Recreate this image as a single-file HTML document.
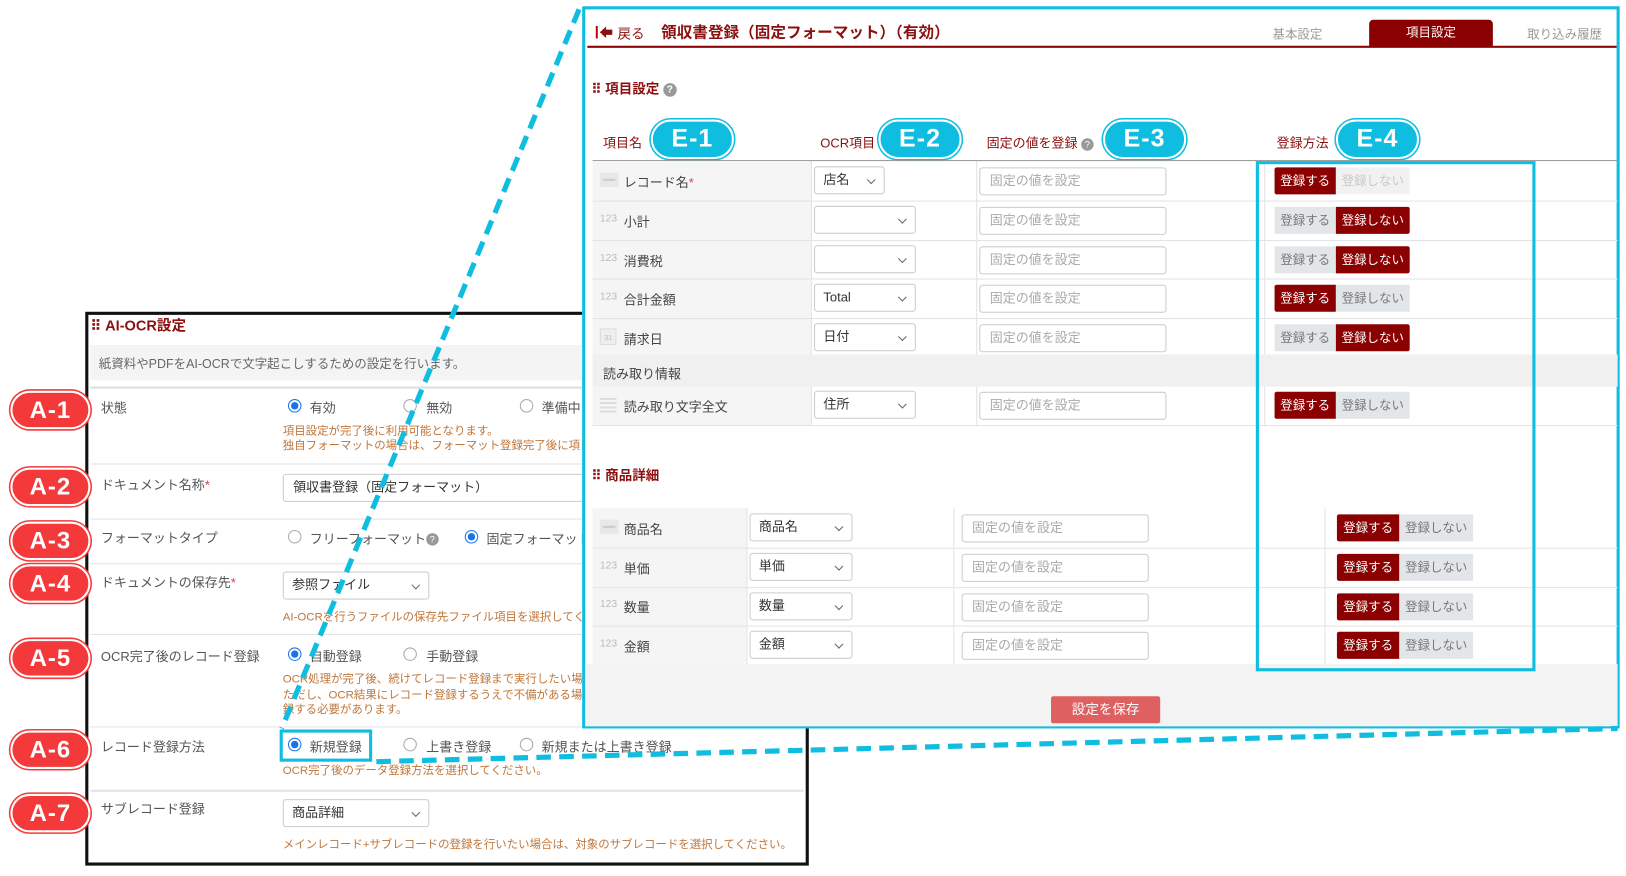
<!DOCTYPE html>
<html><head><meta charset="utf-8">
<style>
*{box-sizing:border-box;margin:0;padding:0}
html,body{width:1626px;height:876px;overflow:hidden;background:#fff}
body{font-family:"Liberation Sans","Noto Sans CJK JP",sans-serif;color:#333}
#c{position:absolute;left:0;top:-1px;width:1564px;height:843px;transform:scale(1.0396,1.0391);transform-origin:0 0}
.a{position:absolute;white-space:nowrap}
.lbl{font-size:12.5px;color:#555}
.note{font-size:11px;color:#c0763a}
.rd{position:absolute;width:13px;height:13px;border:1px solid #aaa;border-radius:50%;background:#fff}
.rd.on{border:1.5px solid #1a73e8}
.rd.on::after{content:"";position:absolute;left:2px;top:2px;width:6.5px;height:6.5px;border-radius:50%;background:#1a73e8}
.hl{position:absolute;height:1px;background:#e3e3e3}
.sel{position:absolute;height:27px;border:1px solid #ccc;border-radius:3px;background:#fff;font-size:12.5px;line-height:25px;padding-left:8px;color:#333}
.sel::after{content:"";position:absolute;right:9px;top:9px;width:5px;height:5px;border-right:1px solid #666;border-bottom:1px solid #666;transform:rotate(45deg)}
.inp{position:absolute;height:27px;border:1px solid #ccc;border-radius:3px;background:#fff;font-size:12.5px;line-height:25px;padding-left:9px;color:#aaa}
.bA{position:absolute;width:77px;height:37px;border-radius:19px;background:#f3393a;border:2px solid #fff;box-shadow:0 0 0 1.5px #f3393a;color:#fff;font-weight:bold;font-size:23px;line-height:33px;text-align:center;letter-spacing:1px}
.bE{position:absolute;width:80px;height:38px;border-radius:19px;background:#0fbde0;border:2px solid #fff;box-shadow:0 0 0 1.5px #0fbde0;color:#fff;font-weight:bold;font-size:24px;line-height:34px;text-align:center;letter-spacing:1px}
.btn{position:absolute;height:26px;font-size:12px;line-height:26px;text-align:center}
.on1{background:#8b0000;color:#fff;border-radius:2px 0 0 2px}
.on2{background:#8b0000;color:#fff;border-radius:0 2px 2px 0}
.off{background:#e3e6e9;color:#777}
.fade{background:#f1f1f1;color:#c8c8c8}
.c1{position:absolute;background:#f5f5f5}
.ic{position:absolute;font-size:10px;color:#bbb}
.dash{position:absolute;width:18px;height:14px;background:#e8e8e8}
.dash::after{content:"";position:absolute;left:3px;top:6px;width:12px;height:2px;background:#ccc}
.red{color:#e04040}
</style></head><body><div id="c">

<!-- LEFT PANEL -->
<div class="a" style="left:82px;top:301px;width:696px;height:533px;border:3px solid #111;background:#fff"></div>
<div class="a" style="left:87px;top:304px;font-size:14px;font-weight:bold;color:#8b1010">⠿ AI-OCR設定</div>
<div class="a" style="left:87px;top:333px;width:480px;height:34px;background:#f4f4f4"></div>
<div class="a lbl" style="left:95px;top:342px;font-size:12px;color:#666">紙資料やPDFをAI-OCRで文字起こしするための設定を行います。</div>
<div class="hl" style="left:87px;top:373px;width:686px;height:2px;background:#ddd"></div>

<div class="a lbl" style="left:97px;top:383px">状態</div>
<div class="rd on" style="left:277px;top:385px"></div><div class="a lbl" style="left:298px;top:383px">有効</div>
<div class="rd" style="left:388px;top:385px"></div><div class="a lbl" style="left:410px;top:383px">無効</div>
<div class="rd" style="left:500px;top:385px"></div><div class="a lbl" style="left:521px;top:383px">準備中</div>
<div class="a note" style="left:272px;top:407px">項目設定が完了後に利用可能となります。</div>
<div class="a note" style="left:272px;top:421px">独自フォーマットの場合は、フォーマット登録完了後に項目</div>
<div class="hl" style="left:87px;top:447px;width:686px"></div>

<div class="a lbl" style="left:97px;top:457px">ドキュメント名称<span class="red">*</span></div>
<div class="inp" style="left:272px;top:457px;width:320px;color:#333">領収書登録（固定フォーマット）</div>
<div class="hl" style="left:87px;top:500px;width:686px"></div>

<div class="a lbl" style="left:97px;top:508px">フォーマットタイプ</div>
<div class="rd" style="left:277px;top:511px"></div><div class="a lbl" style="left:298px;top:509px">フリーフォーマット<span style="display:inline-block;width:12px;height:12px;border-radius:50%;background:#999;color:#fff;font-size:9px;line-height:12px;text-align:center;vertical-align:1px">?</span></div>
<div class="rd on" style="left:447px;top:511px"></div><div class="a lbl" style="left:468px;top:509px">固定フォーマット</div>
<div class="hl" style="left:87px;top:543px;width:686px"></div>

<div class="a lbl" style="left:97px;top:551px">ドキュメントの保存先<span class="red">*</span></div>
<div class="sel" style="left:272px;top:551px;width:141px">参照ファイル</div>
<div class="a note" style="left:272px;top:586px">AI-OCRを行うファイルの保存先ファイル項目を選択してください。</div>
<div class="hl" style="left:87px;top:611px;width:686px"></div>

<div class="a lbl" style="left:97px;top:622px">OCR完了後のレコード登録</div>
<div class="rd on" style="left:277px;top:624px"></div><div class="a lbl" style="left:298px;top:622px">自動登録</div>
<div class="rd" style="left:388px;top:624px"></div><div class="a lbl" style="left:410px;top:622px">手動登録</div>
<div class="a note" style="left:272px;top:646px">OCR処理が完了後、続けてレコード登録まで実行したい場合</div>
<div class="a note" style="left:272px;top:661px">ただし、OCR結果にレコード登録するうえで不備がある場合</div>
<div class="a note" style="left:272px;top:675px">録する必要があります。</div>
<div class="hl" style="left:87px;top:700px;width:686px"></div>

<div class="a lbl" style="left:97px;top:709px">レコード登録方法</div>
<div class="rd on" style="left:277px;top:711px"></div><div class="a lbl" style="left:298px;top:709px">新規登録</div>
<div class="rd" style="left:388px;top:711px"></div><div class="a lbl" style="left:410px;top:709px">上書き登録</div>
<div class="rd" style="left:500px;top:711px"></div><div class="a lbl" style="left:521px;top:709px">新規または上書き登録</div>
<div class="a" style="left:269px;top:703px;width:89px;height:31px;border:3px solid #0fbde0"></div>
<div class="a note" style="left:272px;top:734px">OCR完了後のデータ登録方法を選択してください。</div>
<div class="hl" style="left:87px;top:761px;width:686px;height:2px"></div>

<div class="a lbl" style="left:97px;top:769px">サブレコード登録</div>
<div class="sel" style="left:272px;top:770px;width:141px">商品詳細</div>
<div class="a note" style="left:272px;top:805px">メインレコード+サブレコードの登録を行いたい場合は、対象のサブレコードを選択してください。</div>

<div class="bA" style="left:10px;top:377px">A-1</div>
<div class="bA" style="left:10px;top:451px">A-2</div>
<div class="bA" style="left:10px;top:503px">A-3</div>
<div class="bA" style="left:10px;top:544px">A-4</div>
<div class="bA" style="left:10px;top:616px">A-5</div>
<div class="bA" style="left:10px;top:704px">A-6</div>
<div class="bA" style="left:10px;top:765px">A-7</div>

<!-- RIGHT PANEL -->
<div class="a" style="left:560px;top:7px;width:998px;height:695px;border:3px solid #0fbde0;background:#fff"></div>
<svg class="a" style="left:573px;top:25px" width="18" height="14"><rect x="0" y="1" width="2" height="12" fill="#b00"/><path d="M4 7 L10 1.5 L10 4.5 L16 4.5 L16 9.5 L10 9.5 L10 12.5 Z" fill="#8b1010"/></svg>
<div class="a" style="left:594px;top:23px;font-size:13px;color:#8b1010">戻る</div>
<div class="a" style="left:636px;top:21px;font-size:15px;font-weight:bold;color:#8b1010">領収書登録（固定フォーマット）（有効）</div>
<div class="a" style="left:1224px;top:25px;font-size:12px;color:#999">基本設定</div>
<div class="a" style="left:1317px;top:20px;width:119px;height:26px;background:#8b0000;border-radius:4px 4px 0 0;color:#fff;font-size:12px;text-align:center;line-height:25px">項目設定</div>
<div class="a" style="left:1469px;top:25px;font-size:12px;color:#999">取り込み履歴</div>
<div class="a" style="left:565px;top:45px;width:990px;height:2px;background:#8b0000"></div>

<div class="a" style="left:569px;top:76px;font-size:13px;font-weight:bold;color:#8b1010">⠿ 項目設定 <span style="display:inline-block;width:13px;height:13px;border-radius:50%;background:#999;color:#fff;font-size:10px;line-height:13px;text-align:center;vertical-align:1px">?</span></div>

<div class="a" style="left:580px;top:128px;font-size:12.5px;color:#8b1010">項目名</div>
<div class="a" style="left:789px;top:128px;font-size:12.5px;color:#8b1010">OCR項目</div>
<div class="a" style="left:949px;top:128px;font-size:12.5px;color:#8b1010">固定の値を登録 <span style="display:inline-block;width:12px;height:12px;border-radius:50%;background:#999;color:#fff;font-size:9px;line-height:12px;text-align:center">?</span></div>
<div class="a" style="left:1228px;top:128px;font-size:12.5px;color:#8b1010">登録方法</div>
<div class="bE" style="left:626px;top:116px">E-1</div>
<div class="bE" style="left:845px;top:116px">E-2</div>
<div class="bE" style="left:1061px;top:116px">E-3</div>
<div class="bE" style="left:1285px;top:116px">E-4</div>

<div class="a" style="left:570px;top:155px;width:986px;height:1px;background:#999"></div>
<!-- main table -->
<div class="c1" style="left:570px;top:156px;width:210px;height:186px"></div>
<div class="a" style="left:570px;top:342px;width:986px;height:31px;background:#f0f0f0"></div>
<div class="c1" style="left:570px;top:373px;width:210px;height:37px"></div>
<div class="a" style="left:780px;top:156px;width:1px;height:186px;background:#e3e3e3"></div>
<div class="a" style="left:939px;top:156px;width:1px;height:186px;background:#e3e3e3"></div>
<div class="a" style="left:1216px;top:156px;width:1px;height:186px;background:#e3e3e3"></div>
<div class="a" style="left:780px;top:373px;width:1px;height:37px;background:#e3e3e3"></div>
<div class="a" style="left:939px;top:373px;width:1px;height:37px;background:#e3e3e3"></div>
<div class="a" style="left:1216px;top:373px;width:1px;height:37px;background:#e3e3e3"></div>
<div class="hl" style="left:570px;top:194px;width:986px"></div>
<div class="hl" style="left:570px;top:232px;width:986px"></div>
<div class="hl" style="left:570px;top:269px;width:986px"></div>
<div class="hl" style="left:570px;top:307px;width:986px"></div>
<div class="hl" style="left:570px;top:410px;width:986px"></div>

<div class="dash" style="left:577px;top:167px"></div><div class="a lbl" style="left:600px;top:166px;color:#444">レコード名<span class="red">*</span></div>
<div class="ic" style="left:577px;top:206px">123</div><div class="a lbl" style="left:600px;top:204px;color:#444">小計</div>
<div class="ic" style="left:577px;top:244px">123</div><div class="a lbl" style="left:600px;top:242px;color:#444">消費税</div>
<div class="ic" style="left:577px;top:281px">123</div><div class="a lbl" style="left:600px;top:279px;color:#444">合計金額</div>
<div class="a" style="left:577px;top:317px;width:16px;height:16px;border:1px solid #ddd;background:#eee;font-size:7px;color:#bbb;text-align:center;line-height:18px">31</div><div class="a lbl" style="left:600px;top:317px;color:#444">請求日</div>
<div class="a lbl" style="left:580px;top:350px;color:#444">読み取り情報</div>
<div class="a" style="left:577px;top:384px;width:16px;height:14px;background:repeating-linear-gradient(#ddd 0 2px,#f5f5f5 2px 4px)"></div><div class="a lbl" style="left:600px;top:382px;color:#444">読み取り文字全文</div>

<div class="sel" style="left:783px;top:161px;width:68px">店名</div>
<div class="sel" style="left:783px;top:199px;width:98px"></div>
<div class="sel" style="left:783px;top:237px;width:98px"></div>
<div class="sel" style="left:783px;top:274px;width:98px">Total</div>
<div class="sel" style="left:783px;top:312px;width:98px">日付</div>
<div class="sel" style="left:783px;top:377px;width:98px">住所</div>

<div class="inp" style="left:942px;top:162px;width:180px">固定の値を設定</div>
<div class="inp" style="left:942px;top:200px;width:180px">固定の値を設定</div>
<div class="inp" style="left:942px;top:238px;width:180px">固定の値を設定</div>
<div class="inp" style="left:942px;top:275px;width:180px">固定の値を設定</div>
<div class="inp" style="left:942px;top:313px;width:180px">固定の値を設定</div>
<div class="inp" style="left:942px;top:378px;width:180px">固定の値を設定</div>

<div class="btn on1" style="left:1226px;top:162px;width:59px">登録する</div><div class="btn fade" style="left:1285px;top:162px;width:71px">登録しない</div>
<div class="btn off" style="left:1226px;top:200px;width:59px">登録する</div><div class="btn on2" style="left:1285px;top:200px;width:71px">登録しない</div>
<div class="btn off" style="left:1226px;top:238px;width:59px">登録する</div><div class="btn on2" style="left:1285px;top:238px;width:71px">登録しない</div>
<div class="btn on1" style="left:1226px;top:275px;width:59px">登録する</div><div class="btn off" style="left:1285px;top:275px;width:71px">登録しない</div>
<div class="btn off" style="left:1226px;top:313px;width:59px">登録する</div><div class="btn on2" style="left:1285px;top:313px;width:71px">登録しない</div>
<div class="btn on1" style="left:1226px;top:378px;width:59px">登録する</div><div class="btn off" style="left:1285px;top:378px;width:71px">登録しない</div>

<div class="a" style="left:569px;top:448px;font-size:13px;font-weight:bold;color:#8b1010">⠿ 商品詳細</div>

<!-- sub table -->
<div class="c1" style="left:570px;top:490px;width:148px;height:150px"></div>
<div class="a" style="left:718px;top:490px;width:1px;height:150px;background:#e3e3e3"></div>
<div class="a" style="left:917px;top:490px;width:1px;height:150px;background:#e3e3e3"></div>
<div class="a" style="left:1274px;top:490px;width:1px;height:150px;background:#e3e3e3"></div>
<div class="hl" style="left:570px;top:528px;width:986px"></div>
<div class="hl" style="left:570px;top:566px;width:986px"></div>
<div class="hl" style="left:570px;top:603px;width:986px"></div>
<div class="a" style="left:563px;top:640px;width:993px;height:60px;background:#f3f3f3"></div>

<div class="dash" style="left:577px;top:501px"></div><div class="a lbl" style="left:600px;top:500px;color:#444">商品名</div>
<div class="ic" style="left:577px;top:540px">123</div><div class="a lbl" style="left:600px;top:538px;color:#444">単価</div>
<div class="ic" style="left:577px;top:577px">123</div><div class="a lbl" style="left:600px;top:575px;color:#444">数量</div>
<div class="ic" style="left:577px;top:615px">123</div><div class="a lbl" style="left:600px;top:613px;color:#444">金額</div>

<div class="sel" style="left:721px;top:495px;width:99px">商品名</div>
<div class="sel" style="left:721px;top:533px;width:99px">単価</div>
<div class="sel" style="left:721px;top:571px;width:99px">数量</div>
<div class="sel" style="left:721px;top:608px;width:99px">金額</div>

<div class="inp" style="left:925px;top:496px;width:180px">固定の値を設定</div>
<div class="inp" style="left:925px;top:534px;width:180px">固定の値を設定</div>
<div class="inp" style="left:925px;top:572px;width:180px">固定の値を設定</div>
<div class="inp" style="left:925px;top:609px;width:180px">固定の値を設定</div>

<div class="btn on1" style="left:1286px;top:496px;width:60px">登録する</div><div class="btn off" style="left:1346px;top:496px;width:71px">登録しない</div>
<div class="btn on1" style="left:1286px;top:534px;width:60px">登録する</div><div class="btn off" style="left:1346px;top:534px;width:71px">登録しない</div>
<div class="btn on1" style="left:1286px;top:572px;width:60px">登録する</div><div class="btn off" style="left:1346px;top:572px;width:71px">登録しない</div>
<div class="btn on1" style="left:1286px;top:609px;width:60px">登録する</div><div class="btn off" style="left:1346px;top:609px;width:71px">登録しない</div>

<div class="a" style="left:1011px;top:671px;width:105px;height:26px;background:#df6060;border-radius:2px;color:#fff;font-size:13px;text-align:center;line-height:26px">設定を保存</div>

<div class="a" style="left:1208px;top:156px;width:269px;height:491px;border:3px solid #0fbde0"></div>

<svg class="a" style="left:0;top:0" width="1564" height="843">
<g stroke="#0fbde0" stroke-width="5" stroke-dasharray="14 8" fill="none">
<line x1="557" y1="10" x2="271" y2="702"/>
<line x1="362" y1="734" x2="1556" y2="702"/>
</g>
</svg>
</div></body></html>
